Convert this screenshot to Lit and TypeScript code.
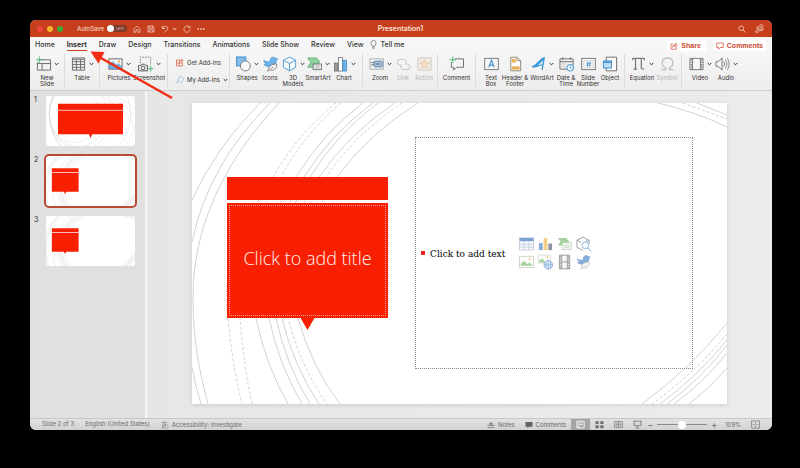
import { LitElement, html, svg, css } from "lit";
import { customElement, property } from "lit/decorators.js";

const GREY = "#6a6a6a";
const BLUE = "#3f8ecb";
const LIGHT_BLUE = "#83bdec";

const icons: Record<string, unknown> = {
  newslide: svg`<path d="M4 3.5H15.5V14.5H1.5V6M1.5 7.5H15.5M6.5 7.5V14.5" stroke=${GREY} fill="none"/><path d="M3.5 0V7M0 3.5H7" stroke="#4db873" fill="none"/>`,
  table: svg`<path d="M1.5 1.5H14.5V14.5H1.5ZM1.5 5.5H14.5M1.5 8.5H14.5M1.5 11.5H14.5M5.8 3.5V14.5M10.2 3.5V14.5M1.5 3H14.5" stroke=${GREY} fill="none"/>`,
  pictures: svg`<rect x="1" y="2.5" width="14" height="11" fill="#f4f4f4" stroke=${GREY}/><path d="M1.5 13V9L5 5.5 9 9 11 7.5 14.5 11V13Z" fill="#6fb1e6" stroke=${BLUE} stroke-width=".6"/><circle cx="11.8" cy="5.2" r="1.1" fill="#f2a64a"/>`,
  screenshot: svg`<path d="M2.5 7V.7H13.5V9" stroke="#777" stroke-dasharray="1.6 1.2" fill="none"/><path d="M.6 9.5H3L4 8.2H7L8 9.5H10V15.3H.6Z" fill="#eee" stroke="#555"/><circle cx="5.4" cy="12.2" r="2" fill="none" stroke="#555"/><path d="M13.5 10V16M10.7 13H16.5" stroke="#4db873" fill="none"/>`,
  shapes: svg`<rect x=".5" y=".5" width="10" height="9.5" fill=${LIGHT_BLUE} stroke=${BLUE}/><circle cx="10" cy="10" r="5.3" fill="#fafafa" stroke=${GREY} stroke-width=".9"/>`,
  bird: svg`<path d="M.8 4C3 5.5 5 6 7.5 5.2 7 2.5 9 .5 11.2 .8 13 1 13.6 2.3 15.8 2.2 14.7 3.5 14.3 4.5 14 6.5 13.5 9.5 10.5 11.5 7 11 4.5 10.7 2 10 1 8.5L3.5 8C1.5 7 .8 5.7 .8 4Z" fill="#6cb1e8" stroke=${BLUE} stroke-width=".6"/><path d="M5.5 15.5C5.3 11 8 8.2 14.5 8 15 12 12.5 15.2 7.5 14.8M4.5 16L11 11" fill="#f6f6f6" stroke=${GREY} stroke-width=".8"/>`,
  cube: svg`<path d="M8 .7 14.5 4V11.5L8 15.3 1.5 11.5V4ZM1.5 4 8 7.5 14.5 4M8 7.5V15.3" fill="#f7fbfe" stroke=${BLUE} stroke-width=".9"/>`,
  smartart: svg`<path d="M.8 1.5H10L13.5 5.5 10 11.5H.8L4 6.5Z" fill="#8fd19b" stroke="#53aa68" stroke-width=".8"/><rect x="6.5" y="8" width="9" height="6" fill="#eee" stroke=${GREY} stroke-width=".9"/><path d="M8.5 10H13.5M8.5 12H13.5" stroke="#999" stroke-width=".7"/>`,
  chart: svg`<rect x="1.5" y="7" width="3.8" height="8.5" fill="#9b9b9b" stroke=${GREY} stroke-width=".8"/><rect x="5.8" y="1" width="4.2" height="14.5" fill="#fff" stroke=${GREY} stroke-width=".8"/><rect x="10.5" y="4" width="4" height="11.5" fill="#6cb1e8" stroke=${BLUE} stroke-width=".8"/>`,
  zoom: svg`<path d="M1 2.5H15.5V13.5H1Z" fill="none" stroke="#9a9a9a" stroke-width=".8"/><rect x="5.5" y="5" width="8.5" height="6" rx="1" fill="#a9cdea" stroke="#527895"/><path d="M2.5 6.5H5M2.5 9H5M7 8H12" stroke="#555" stroke-width="1"/>`,
  link: svg`<path d="M6 9H4.2A3 3 0 0 1 4.2 3H8A3 3 0 0 1 10.5 7.5M10 8H12A3 3 0 0 1 12 14H8.5A3 3 0 0 1 6 9" fill="none" stroke="#c3c3c3" stroke-width="1"/>`,
  action: svg`<rect x="1" y="1.5" width="14" height="13" fill="#f1ebe6" stroke="#cfc8c2"/><path d="M8 3.5 9.3 6.7 12.7 7 10.2 9.2 11 12.5 8 10.7 5 12.5 5.8 9.2 3.3 7 6.7 6.7Z" fill="#f6ddc5" stroke="#e9bd92" stroke-width=".7"/>`,
  comment: svg`<path d="M6 2.5H15.5V11.5H8L5 14.5V11.5H2.5V6" fill="none" stroke=${GREY}/><path d="M4 0V7M.5 3.5H7.5" stroke="#4db873"/>`,
  textbox: svg`<rect x=".7" y="2" width="14.6" height="12" fill="#f6f6f6" stroke="#777"/><path d="M5 11.5 8 4 11 11.5M6 9.2H10" fill="none" stroke=${BLUE} stroke-width="1.1"/>`,
  header: svg`<path d="M3 .8H9.5L13.5 4.5V15.2H3Z" fill="#fff" stroke="#857564" stroke-width=".9"/><path d="M9.5 .8V4.5H13.5" fill="none" stroke="#857564" stroke-width=".8"/><path d="M4.5 6V3H8V6ZM4.5 11H12V13.5H4.5Z" fill="#f1b557" stroke="#d59431" stroke-width=".5"/>`,
  wordart: svg`<path d="M1.2 10.5C5 10.8 10 7 14.2 1.2L11.8 14.2M1.2 10.5C3 12.5 8.5 9 13 8.8M12.8 1.5 4 9.8" fill="none" stroke="#3193dc" stroke-width="1.3" stroke-linejoin="round"/>`,
  date: svg`<path d="M1 2.5H15V13.5H1ZM1 5.5H15M4 .8V3.5M12 .8V3.5" fill="none" stroke=${GREY}/><path d="M3 8H8M3 11H7" stroke="#aaa" stroke-width=".7"/><circle cx="12" cy="12" r="3.6" fill="#edf7ff" stroke=${BLUE}/><path d="M12 9.8V12.3H14" fill="none" stroke=${BLUE} stroke-width=".8"/>`,
  number: svg`<rect x=".7" y="2" width="14.6" height="12" fill="#f8f8f8" stroke="#777"/><path d="M3 4.5H13V12H3Z" fill="none" stroke="#bbb" stroke-width=".6"/><path d="M7.5 5.5 6.8 10.8M9.8 5.5 9 10.8M5.8 7.2H10.8M5.5 9.2H10.5" stroke=${BLUE} stroke-width=".8"/>`,
  object: svg`<path d="M3.5 5V.7H14.5V15.3H3.5V12" fill="#fbfbfb" stroke=${GREY}/><rect x=".6" y="4.7" width="8.5" height="7.5" fill="#bcdff8" stroke=${BLUE}/><path d="M.6 6.2H9" stroke=${BLUE} stroke-width="1.5"/>`,
  pi: svg`<path d="M1.5 2H14.5M4.8 2V13.5M11 2V12Q11 13.8 14 13.2M2.8 13.5H6.5M1.7 2V4M14.3 2V4" fill="none" stroke="#777" stroke-width="1.3"/>`,
  omega: svg`<path d="M1.5 14H6V12.3C3 10.8 2.3 8.6 2.3 6.9 2.3 3.6 4.6 1.5 8 1.5S13.7 3.6 13.7 6.9C13.7 8.6 13 10.8 10 12.3V14H14.5" fill="none" stroke="#bcbcbc" stroke-width="1.2"/>`,
  video: svg`<path d="M1 2H15V14H1ZM3.8 2V14M12.2 2V14" fill="#f7f7f7" stroke=${GREY} stroke-width=".9"/><path d="M2.4 3V13.5M13.6 3V13.5" stroke="#555" stroke-width="1.1" stroke-dasharray="1.2 1.3"/>`,
  audio: svg`<path d="M1 5.5H3.5L7.5 1.5V14.5L3.5 10.5H1Z" fill="none" stroke=${GREY} stroke-width=".9"/><path d="M9.3 5.3Q11 8 9.3 10.7M11.3 3.5Q14 8 11.3 12.5M13.2 1.8Q17 8 13.2 14.2" fill="none" stroke="#777" stroke-width=".9"/>`,
  addins: svg`<path d="M1 2H7V14H1ZM1 8H13V14H7" fill="none" stroke="#d4613e" stroke-width="1.5"/><path d="M11.5 0V7M8 3.5H15" stroke="#d4613e" stroke-width="1.5"/>`,
  myaddins: svg`<path d="M6 2.5 10 1 14.5 4 14 9.5 9.5 13 6.5 10.5 2.5 14 1.5 11 5 8.5Z" fill="#f2f8fd" stroke="#7fb4dc" stroke-width="1.4"/>`,
  home: svg`<path d="M2 7.5 8 2 14 7.5V14.5H10V10Q8 7.5 6 10V14.5H2Z" fill="none" stroke="#f5d2c6" stroke-width="1.4"/>`,
  save: svg`<path d="M2 2H12.5L14 3.5V14H2ZM5 2V6.5H11V2M4.5 14V9.5H11.5V14" fill="none" stroke="#f5d2c6" stroke-width="1.4"/>`,
  undo: svg`<path d="M2.5 1.5V7H8M3 6.5C6 1.5 13.5 2 13.5 7 13.5 10.5 9.5 11.5 7 15" fill="none" stroke="#f9ddd3" stroke-width="1.5"/>`,
  redo: svg`<path d="M14 1.5V5.5H10M13.5 5A6.3 6.3 0 1 0 14.3 9" fill="none" stroke="#f5d2c6" stroke-width="1.5"/>`,
  dots: svg`<circle cx="2.5" cy="8" r="1.7" fill="#fbe6df"/><circle cx="8" cy="8" r="1.7" fill="#fbe6df"/><circle cx="13.5" cy="8" r="1.7" fill="#fbe6df"/>`,
  search: svg`<circle cx="6.5" cy="6.5" r="4.7" fill="none" stroke="#f7dbd1" stroke-width="1.5"/><path d="M10 10 15 15" stroke="#f7dbd1" stroke-width="1.7"/>`,
  people: svg`<circle cx="11.5" cy="4" r="2.8" fill="none" stroke="#f7dbd1" stroke-width="1.4"/><circle cx="5" cy="6.5" r="2" fill="none" stroke="#f7dbd1" stroke-width="1.3"/><path d="M1 14.5C1 10 5 10 8 10L15 8.5C14 12 11 12 9 12M1 14.5H6L8 11" fill="none" stroke="#f7dbd1" stroke-width="1.3"/>`,
  bulb: svg`<path d="M5.5 11C5.5 9 3.5 8 3.5 5.3A4.5 4.5 0 0 1 12.5 5.3C12.5 8 10.5 9 10.5 11ZM6 13.2H10M6.5 15.2H9.5" fill="none" stroke="#666" stroke-width="1.2"/>`,
  share: svg`<path d="M6 4H2V14.5H12.5V10M5.5 10.5C5.5 6.5 8 5 11 5V2L15 6 11 10V7.3C8.5 7.3 7 8 5.5 10.5Z" fill="none" stroke="#c9472b" stroke-width="1.3"/>`,
  bubble: svg`<path d="M1.5 2H14.5V11H8L5 14.5V11H1.5Z" fill="none" stroke="#c9472b" stroke-width="1.4"/>`,
  access: svg`<path d="M1 3H12M6.5 0V3M3 6H10M4 6V14M9 6V10M2 10H7M1 14H6" stroke="#888" stroke-width="1.4" fill="none"/><circle cx="11" cy="11.5" r="3.5" fill="none" stroke="#888" stroke-width="1.3"/>`,
  notes: svg`<path d="M1 9H15M1 13H15M4.5 6.5H11.5L8 2.5Z" stroke="#777" fill="#999" stroke-width="1.5"/>`,
  filled: svg`<path d="M1 2H15V11.5H8L5 15V11.5H1Z" fill="#626262"/>`,
  normal: svg`<path d="M1.5 2H14.5V14H1.5ZM5 2V14M7.5 5H12M7.5 8H12" fill="none" stroke="#fff" stroke-width="1.5"/>`,
  sorter: svg`<path d="M1 2H6.5V7H1ZM9.5 2H15V7H9.5ZM1 9.5H6.5V14.5H1ZM9.5 9.5H15V14.5H9.5Z" fill="#6c6c6c"/>`,
  reading: svg`<path d="M1 2.5H15V13.5H1ZM8 2.5V13.5M3 5.5H6.5M3 8H6.5M3 10.5H6.5M9.5 5.5H13M9.5 8H13M9.5 10.5H13" fill="none" stroke="#858585" stroke-width="1.4"/>`,
  show: svg`<path d="M.5 2H15.5M2 2V10H14V2M8 10V14.5M5 14.5H11" fill="none" stroke="#777" stroke-width="1.5"/>`,
  fit: svg`<path d="M1 1.5H15V14.5H1ZM8 3.5V6.5M8 9.5V12.5M3.5 8H6.5M9.5 8H12.5" fill="none" stroke="#777" stroke-width="1.3"/>`,
  gridtable: svg`<path d="M.5 1.5H15.5V14.5H.5Z" fill="#f6f9fc" stroke="#b5bfce" stroke-width=".7"/><path d="M.5 1.5H15.5V5H.5Z" fill="#7aa3d6"/><path d="M.5 8.2H15.5M.5 11.3H15.5M5.5 5V14.5M10.5 5V14.5" stroke="#b5c6dd" stroke-width=".7"/>`,
  bars: svg`<path d="M1 7H5V14.5H1Z" fill="#85aede"/><path d="M6 1.5H10V14.5H6Z" fill="#f5d185"/><path d="M11 7.5H15V14.5H11Z" fill="#8d96a3"/>`,
  bodyart: svg`<path d="M.5 1.5H9.5L13 5 9.5 9.5H.5L4 5.5Z" fill="#a6d19f"/><rect x="5.5" y="6.5" width="10" height="7.5" fill="#f2f7f2" stroke="#b6ceb5" stroke-width=".7"/><path d="M8 9.5H13.5M8 11.5H13.5" stroke="#b9c7b9" stroke-width=".7"/>`,
  cubefind: svg`<path d="M7.5 .7 14 4V8M7.5 15 1 11.5V4L7.5 .7M1 4 5.5 6.5M14 4 10 5.5" fill="none" stroke="#8d949f" stroke-width=".9"/><circle cx="10" cy="9.5" r="3.6" fill="#f5faff" stroke="#7da6cf" stroke-width=".8"/><path d="M12.5 12 16 15.7" stroke="#7da6cf"/>`,
  photo: svg`<path d="M.5 2H15.5V14H.5Z" fill="#fcfdfb" stroke="#b7c2b5" stroke-width=".7"/><path d="M2 12V10L5.5 6.5 8.5 10 11 8.5 14 11V12Z" fill="#a9d0a0"/><circle cx="11.5" cy="5" r="1.2" fill="#f3cf87"/>`,
  webphoto: svg`<path d="M.5 .7H13V9H.5Z" fill="#fcfdfb" stroke="#c5cec3" stroke-width=".7"/><path d="M1.5 8.5V6.5L4.5 4 8 8.5Z" fill="#a9d0a0"/><circle cx="10" cy="3" r="1.2" fill="#f3cf87"/><circle cx="11" cy="11" r="4.5" fill="#e5f0fc" stroke="#7ba6da" stroke-width=".9"/><path d="M6.5 11H15.5M11 6.5V15.5M8.8 7.5Q7.8 11 8.8 14.5M13.2 7.5Q14.2 11 13.2 14.5" fill="none" stroke="#7ba6da" stroke-width=".7"/>`,
  film: svg`<path d="M2.5 .7H13.5V15.3H2.5ZM5 .7V15.3M11 .7V15.3M5 8H11" fill="#f7f7f7" stroke="#8b8b8b" stroke-width=".9"/><path d="M3.7 2V15M12.3 2V15" stroke="#777" stroke-dasharray="1 1.3" stroke-width="1"/>`,
  softbird: svg`<path d="M.8 4C3 5.5 5 6 7.5 5.2 7 2.5 9 .5 11.2 .8 13 1 13.6 2.3 15.8 2.2 14.7 3.5 14.3 4.5 14 6.5 13.5 9.5 10.5 11.5 7 11 4.5 10.7 2 10 1 8.5L3.5 8C1.5 7 .8 5.7 .8 4Z" fill="#88acd8"/><path d="M5.5 15C5.3 11 8 8.2 14 8 14.5 12 12.5 15 7.5 14.8M4.5 16L10 11.5" fill="#f4f4f2" stroke="#c0c0bd" stroke-width=".7"/>`,
};

const icon = (name: string, cls = "i8") =>
  html`<svg class="icon ${cls}" viewBox="0 0 16 16" aria-hidden="true">${icons[name]}</svg>`;
const chevron = html`<svg class="chev" viewBox="0 0 5 4" aria-hidden="true"><path d="M.7 1 2.5 2.8 4.3 1" fill="none" stroke="currentColor"/></svg>`;

type Tool = { label: string; icon: string; size: string; menu?: boolean; off?: boolean };
const t = (label: string, icon: string, size: string, menu = false, off = false): Tool => ({ label, icon, size, menu, off });

const GROUPS: { name: string; tools: Tool[] }[] = [
  { name: "slides", tools: [t("New Slide", "newslide", "fill", true)] },
  { name: "tables", tools: [t("Table", "table", "fill", true)] },
  { name: "images", tools: [t("Pictures", "pictures", "w28", true), t("Screenshot", "screenshot", "w32", true)] },
  { name: "addins", tools: [] },
  { name: "illustrations", tools: [t("Shapes", "shapes", "w24", true), t("Icons", "bird", "w22"), t("3D Models", "cube", "w24", true), t("SmartArt", "smartart", "w26", true), t("Chart", "chart", "w26", true)] },
  { name: "links", tools: [t("Zoom", "zoom", "w24", true), t("Link", "link", "w22", false, true), t("Action", "action", "w20", false, true)] },
  { name: "comments", tools: [t("Comment", "comment", "fill")] },
  { name: "text", tools: [t("Text Box", "textbox", "w20"), t("Header & Footer", "header", "w28"), t("WordArt", "wordart", "w26", true), t("Date & Time", "date", "w22"), t("Slide Number", "number", "w22"), t("Object", "object", "w22")] },
  { name: "symbols", tools: [t("Equation", "pi", "w24", true), t("Symbol", "omega", "w26", false, true)] },
  { name: "media", tools: [t("Video", "video", "w26", true), t("Audio", "audio", "w26", true)] },
];

const TABS = ["Home", "Insert", "Draw", "Design", "Transitions", "Animations", "Slide Show", "Review", "View"];

const PICKS = [
  ["gridtable", "Insert table"],
  ["bars", "Insert chart"],
  ["bodyart", "Insert SmartArt"],
  ["cubefind", "3D models"],
  ["photo", "Picture from file"],
  ["webphoto", "Online pictures"],
  ["film", "Insert video"],
  ["softbird", "Insert icon"],
];

/* Ring crossings at the top edge, the band, the callout foot and the bottom edge. */
const RINGS: { x: [number, number, number, number]; dash?: boolean }[] = [
  { x: [144, 81, 36, 50], dash: true },
  { x: [149, 89, 48, 60], dash: true },
  { x: [171, 104, 64, 96] },
  { x: [181, 112, 77, 110] },
  { x: [186, 118, 84, 118] },
  { x: [203, 127, 90, 127] },
  { x: [210, 134, 96, 135], dash: true },
  { x: [226, 145, 106, 148] },
];
const ringPath = ([a, b, c, d]: number[]) =>
  `M${a} 0Q${b + (a - b) * 0.4} 30 ${b} 74C${b - 22} 108 ${c - 10} 160 ${c} 215Q${c + (d - c) * 0.3} 262 ${d} 301`;

@customElement("slide-art")
class SlideArt extends LitElement {
  @property() kind = "content";
  static styles = css`
    :host { display: block; aspect-ratio: 535 / 301; background: #fff; overflow: hidden; }
    svg { display: block; width: 100%; height: 100%; }
    .ring { fill: none; stroke: #d2d2d2; stroke-width: 1; }
    .dash { stroke-dasharray: 3 2; }
    .mini { stroke: #dedede; stroke-width: 3; }
  `;
  render() {
    const mini = this.kind !== "content" ? "mini" : "";
    const rings = svg`
      <path class="ring ${mini}" d="M68 0Q24 44 0 97"/>
      <path class="ring ${mini}" d="M78 0Q16 62 0 139M0 264Q3 282 9 301"/>
      <path class="ring ${mini}" d="M87 0C40 50 1 115 1 194C1 240 8 270 16 301"/>
      ${RINGS.map((r) => svg`<path class="ring ${mini} ${r.dash ? "dash" : ""}" d=${ringPath(r.x)}/>`)}
      <path class="ring ${mini}" d="M466 0Q504 9 535 24M505 0L535 12M535 220Q500 264 450 301M535 237Q506 273 468 301M535 242Q510 275 475 301M535 250Q512 279 482 301M535 265Q518 285 497 301"/>
      <path class="ring dash ${mini}" d="M491 0L535 16M535 231Q504 269 460 301"/>`;
    const cover = svg`
      ${[150, 175, 190, 245, 262, 285].map((r) => svg`<ellipse class="ring mini" cx=${r + 20} cy="110" rx=${r} ry=${r + 20}/>`)}
      <path class="ring mini" d="M330 0Q480 70 535 190M370 0Q500 60 535 130M410 0Q500 30 535 80"/>
      <path fill="#f91f02" d="M72 46H463V230H278L268 252 258 230H72Z"/><path d="M72 86H463" stroke="#fbb" stroke-width="6"/>`;
    const callout = svg`<path fill="#f91f02" d="M35 74H196V97H35ZM35 102H196V215H122L115 228 108 215H35Z"/><path fill="#fbb" d="M35 97H196V102H35Z"/>`;
    return html`<svg viewBox="0 0 535 301" preserveAspectRatio="none" aria-hidden="true">
      ${this.kind === "cover" ? cover : rings}${this.kind === "callout" ? callout : ""}
    </svg>`;
  }
}

@customElement("app-root")
class AppRoot extends LitElement {
  static styles = css`
    * { box-sizing: border-box; }
    :host { display: flex; flex-direction: column; box-sizing: border-box; min-height: 100vh; padding: 20px 28px 38px 30px; background: #000; font: 6px/6px "Inter", "Liberation Sans", sans-serif; color: #303030; }
    button { display: flex; align-items: center; border: 0; margin: 0; padding: 0; background: none; font: inherit; color: inherit; white-space: nowrap; }
    .icon { display: block; flex: none; overflow: visible; }
    .i8 { width: 8px; height: 8px; }
    .i9 { width: 9px; height: 9px; }
    .i15 { width: 15px; height: 16px; }
    .chev { display: block; width: 5px; height: 4px; flex: none; }

    .window { position: relative; flex: 1; display: flex; flex-direction: column; border-radius: 6px; background: #e9e9e9; }
    .titlebar { display: grid; grid-template-columns: 1fr auto 1fr; align-items: center; height: 17px; padding: 0 8px 0 7px; background: #c63e1b; border-radius: 6px 6px 0 0; color: #fbe3da; }
    .left { display: flex; align-items: center; gap: 6px; }
    .lights { display: flex; gap: 4px; margin-right: 8px; }
    .light { width: 6px; height: 6px; border-radius: 50%; background: #f0463c; }
    .light.min { background: #f6b52e; }
    .light.max { background: #3cab38; }
    .auto { display: flex; align-items: center; gap: 3px; }
    .history { display: flex; align-items: center; gap: 3px; }
    .switch { appearance: none; margin: 0; width: 20px; height: 7px; border-radius: 4px; background: #7c3c2c; display: flex; align-items: center; justify-content: space-between; padding-right: 3px; color: #e2c6bd; font: 4px/7px "Inter", sans-serif; }
    .switch::before { content: ""; width: 7px; height: 7px; border-radius: 50%; background: #fff; }
    .switch::after { content: "OFF"; }
    .doc { margin: 0; font-size: 7px; font-weight: 600; line-height: 9px; }
    .right { display: flex; justify-content: flex-end; gap: 9px; }

    .tabs { display: flex; align-items: center; height: 15px; padding: 0 6px 0 5px; background: #f6f6f6; font-weight: 500; font-size: 7px; line-height: 11px; color: #333; }
    .tablist { display: flex; gap: 12px; }
    .tabs .tab { height: 13px; border-bottom: 1px solid transparent; border-top: 1px solid transparent; }
    .tabs .tab.on { font-weight: 700; border-bottom-color: #c63e1b; }
    .tell { gap: 3px; margin-left: 5px; }
    .actions { display: flex; gap: 7px; margin-left: auto; padding-top: 2px; }
    .pill { gap: 3px; height: 11px; padding: 0 3px; background: #fff; border-radius: 2px; color: #c9472b; font: 700 7px/11px "Liberation Sans", sans-serif; }
    .pill:first-child { padding-right: 5px; }

    .ribbon { display: grid; grid-template-columns: 35fr 35fr 68fr 62fr 133fr 75fr 38fr 149fr 57fr 90fr; height: 39px; padding-top: 2px; background: linear-gradient(#f6f6f6, #ededed); border-bottom: 1px solid #cfcfcf; }
    .group { display: flex; align-items: flex-start; padding-left: 5px; border-right: 1px solid #dcdcdc; height: 34px; min-width: 0; }
    .group:last-child { border: 0; }
    .group.slides, .group.tables, .group.comments { padding-left: 0; }
    .tool { flex-direction: column; gap: 3px; padding-top: 2px; flex: none; }
    .off { color: #b5b5b5; }
    .fill { width: 100%; }
    .w20 { width: 20px; }
    .w22 { width: 22px; }
    .w24 { width: 24px; }
    .w26 { width: 26px; }
    .w28 { width: 28px; }
    .w32 { width: 32px; }
    .face { display: flex; align-items: center; gap: 3px; }
    .cap { display: flex; flex-direction: column; align-items: center; width: 100%; }
    .group.addins { flex-direction: column; padding: 5px 0 0 8px; gap: 9px; }
    .addin { gap: 3px; }

    .body { flex: 1; display: flex; }
    .rail { width: 117px; flex: none; margin: 0; padding: 5px 10px 0 4px; background: #e0e0e0; border-right: 2px solid #f4f4f4; list-style: none; display: flex; flex-direction: column; gap: 10px; }
    .thumb { display: flex; gap: 7px; font-size: 7px; line-height: 8px; }
    .n { width: 5px; }
    .card { display: block; width: 89px; padding: 0; border-radius: 2px; }
    .card slide-art { border-radius: 2px; width: 100%; }
    .card.on { outline: 2px solid #bb4a35; border-radius: 3px; }
    .stage { flex: 1; padding: 12px 45px 14px; background: linear-gradient(90deg, #e6e6e6, #ececec); }
    .slide { display: grid; aspect-ratio: 535 / 301; box-shadow: 0 1px 4px #ccc; }
    .slide > * { grid-area: 1 / 1; }
    .layout { z-index: 1; display: flex; justify-content: space-between; padding: 34px 34px 35px 35px; }
    .title { width: 161px; margin: 40px 0 0; text-align: center; }
    .band { height: 23px; background: #f91f02; margin-bottom: 3px; }
    .callout { height: 115px; padding: 2px; background: #f91f02; }
    .callout h2 { display: flex; align-items: center; justify-content: center; height: 100%; margin: 0; padding-bottom: 6px; border: 1px dotted #f9a08f; color: #fff1ed; font: 300 18px/24px "Open Sans", sans-serif; white-space: nowrap; }
    .tip { display: block; width: 14px; height: 12px; margin: 0 auto; background: #f91f02; clip-path: polygon(0 0, 100% 0, 50% 100%); }
    .content { display: flex; align-items: center; width: 278px; border: 1px dotted #888; padding-left: 5px; }
    .bullet { width: 4px; height: 4px; background: #e22; margin-right: 5px; }
    .prompt { margin: 0; width: 76px; padding-top: 2px; font: 9px/12px "DejaVu Serif", serif; color: #000; white-space: nowrap; }
    .picks { display: grid; grid-template-columns: repeat(4, 15px); gap: 2px 4px; margin-left: 13px; }

    .status { display: flex; align-items: center; height: 12px; padding: 0 12px; background: linear-gradient(#e2e2e2, #d2d2d2); border-top: 1px solid #c7c7c7; border-radius: 0 0 6px 6px; color: #6b6b6b; }
    .info { display: flex; gap: 11px; }
    .status button { gap: 3px; }
    .tools { display: flex; align-items: center; gap: 10px; margin-left: auto; }
    .views { display: flex; align-items: center; margin: 0 -10px 0 -5px; }
    .views button { width: 19px; height: 11px; justify-content: center; }
    .views button.on { background: #a5a5a5; }
    .zoomer { display: flex; align-items: center; gap: 4px; font-size: 9px; margin-right: -2px; }
    .zoomer input { appearance: none; width: 50px; height: 8px; margin: 0; background: linear-gradient(#8c8c8c, #8c8c8c) center / 100% 1px no-repeat; }
    .zoomer input::-webkit-slider-thumb { appearance: none; width: 8px; height: 8px; border-radius: 50%; background: #fff; }
    .pointer { position: absolute; left: 60px; top: 31px; width: 84px; height: 49px; pointer-events: none; }
  `;

  private tool(tool: Tool) {
    const cut = tool.label.lastIndexOf(" ");
    const lines = cut > 0 ? [tool.label.slice(0, cut), tool.label.slice(cut + 1)] : [tool.label];
    return html`<button class="tool ${tool.size} ${tool.off ? "off" : ""}" ?disabled=${tool.off}>
      <span class="face">${icon(tool.icon, "i15")}${tool.menu ? chevron : ""}</span>
      <span class="cap">${lines.map((l) => html`<span>${l}</span>`)}</span>
    </button>`;
  }

  render() {
    return html`
      <div class="window">
        <header class="titlebar">
          <div class="left">
            <div class="lights"><span class="light"></span><span class="light min"></span><span class="light max"></span></div>
            <label class="auto">AutoSave <input class="switch" type="checkbox" role="switch" /></label>
            <button aria-label="Home">${icon("home")}</button>
            <button aria-label="Save">${icon("save")}</button>
            <div class="history"><button aria-label="Undo">${icon("undo")}</button><button aria-label="Undo history">${chevron}</button></div>
            <button aria-label="Redo">${icon("redo")}</button>
            <button aria-label="More">${icon("dots")}</button>
          </div>
          <h1 class="doc">Presentation1</h1>
          <div class="right"><button aria-label="Search">${icon("search")}</button><button aria-label="Account">${icon("people", "i9")}</button></div>
        </header>
        <nav class="tabs">
          <div class="tablist">${TABS.map((n) => html`<button class="tab ${n === "Insert" ? "on" : ""}">${n}</button>`)}</div>
          <button class="tell">${icon("bulb", "i9")}Tell me</button>
          <div class="actions">
            <button class="pill">${icon("share")}Share</button>
            <button class="pill">${icon("bubble")}Comments</button>
          </div>
        </nav>
        <div class="ribbon">
          ${GROUPS.map((g) => html`<div class="group ${g.name}">
            ${g.name === "addins"
              ? html`<button class="addin">${icon("addins")}Get Add-ins</button><button class="addin">${icon("myaddins")}My Add-ins ${chevron}</button>`
              : g.tools.map((x) => this.tool(x))}
          </div>`)}
        </div>
        <main class="body">
          <ol class="rail">
            ${["cover", "callout", "callout"].map((kind, i) => html`<li class="thumb"><span class="n">${i + 1}</span>
              <button class="card ${i === 1 ? "on" : ""}" aria-label="Slide ${i + 1}"><slide-art kind=${kind}></slide-art></button></li>`)}
          </ol>
          <section class="stage">
            <div class="slide">
              <slide-art></slide-art>
              <div class="layout">
                <div class="title">
                  <div class="band"></div>
                  <div class="callout"><h2>Click to add title</h2></div>
                  <span class="tip"></span>
                </div>
                <div class="content">
                  <span class="bullet"></span><p class="prompt">Click to add text</p>
                  <div class="picks">
                    ${PICKS.map(([name, label]) => html`<button aria-label=${label}>${icon(name, "i15")}</button>`)}
                  </div>
                </div>
              </div>
            </div>
          </section>
        </main>
        <footer class="status">
          <div class="info"><span>Slide 2 of 3</span><span>English (United States)</span><button>${icon("access")}Accessibility: Investigate</button></div>
          <div class="tools">
            <button>${icon("notes")}Notes</button>
            <button>${icon("filled")}Comments</button>
            <div class="views">
              <button class="on" aria-label="Normal">${icon("normal", "i9")}</button><button aria-label="Slide sorter">${icon("sorter", "i9")}</button><button aria-label="Reading view">${icon("reading", "i9")}</button><button aria-label="Slide show">${icon("show", "i9")}</button>
            </div>
            <div class="zoomer"><button aria-label="Zoom out">−</button><input type="range" min="0" max="100" value="50" aria-label="Zoom" /><button aria-label="Zoom in">+</button></div>
            <span>109%</span>
            <button aria-label="Fit">${icon("fit", "i9")}</button>
          </div>
        </footer>
        <svg class="pointer" viewBox="0 0 84 49" aria-hidden="true"><path d="M10 6.5 82 47" stroke="#f32c14" stroke-width="2.5"/><path d="M.5 .5 14.5 1 8.5 12.5Z" fill="#f32c14"/></svg>
      </div>`;
  }
}
